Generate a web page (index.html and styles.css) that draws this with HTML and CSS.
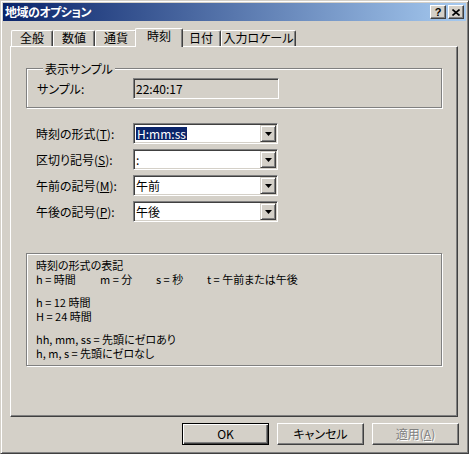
FILE: index.html
```html
<!DOCTYPE html>
<html lang="ja">
<head>
  <meta charset="UTF-8" />
  <title>地域のオプション</title>
  <link rel="stylesheet" href="styles.css">
</head>
<body>
  <div class="window">
    <div class="titlebar">
      <span class="title">地域のオプション</span>
      <div class="caption-buttons">
        <button class="cap-btn">?</button>
        <button class="cap-btn">
          <svg width="8" height="7" viewBox="0 0 8 7">
            <path d="M0.5 0.5 L7.5 6.5 M7.5 0.5 L0.5 6.5" stroke="#000" stroke-width="1.6" fill="none"/>
          </svg>
        </button>
      </div>
    </div>

    <div class="dialog">
      <div class="tabs">
        <div class="tab w42">全般</div>
        <div class="tab w42">数値</div>
        <div class="tab w42">通貨</div>
        <div class="tab active">時刻</div>
        <div class="tab w40">日付</div>
        <div class="tab w75">入力ロケール</div>
      </div>

      <div class="panel">
        <fieldset class="group">
          <legend>表示サンプル</legend>
          <div class="sample-row">
            <span class="label">サンプル:</span>
            <div class="field readonly">22:40:17</div>
          </div>
        </fieldset>

        <div class="form">
          <div class="form-row">
            <span class="label">時刻の形式(<u>T</u>):</span>
            <div class="combo">
              <span class="combo-text"><span class="selected">H:mm:ss</span></span>
              <span class="drop-btn"><svg width="7" height="4" viewBox="0 0 7 4"><path d="M0 0 H7 L3.5 4 Z" fill="#000"/></svg></span>
            </div>
          </div>
          <div class="form-row">
            <span class="label">区切り記号(<u>S</u>):</span>
            <div class="combo">
              <span class="combo-text">:</span>
              <span class="drop-btn"><svg width="7" height="4" viewBox="0 0 7 4"><path d="M0 0 H7 L3.5 4 Z" fill="#000"/></svg></span>
            </div>
          </div>
          <div class="form-row">
            <span class="label">午前の記号(<u>M</u>):</span>
            <div class="combo">
              <span class="combo-text">午前</span>
              <span class="drop-btn"><svg width="7" height="4" viewBox="0 0 7 4"><path d="M0 0 H7 L3.5 4 Z" fill="#000"/></svg></span>
            </div>
          </div>
          <div class="form-row">
            <span class="label">午後の記号(<u>P</u>):</span>
            <div class="combo">
              <span class="combo-text">午後</span>
              <span class="drop-btn"><svg width="7" height="4" viewBox="0 0 7 4"><path d="M0 0 H7 L3.5 4 Z" fill="#000"/></svg></span>
            </div>
          </div>
        </div>

        <div class="info">
          <p>
            時刻の形式の表記<br>
            <span class="col c1">h = 時間</span><span class="col c2">m = 分</span><span class="col c3">s = 秒</span><span>t = 午前または午後</span>
          </p>
          <p>
            h = 12 時間<br>
            H = 24 時間
          </p>
          <p>
            hh, mm, ss = 先頭にゼロあり<br>
            h, m, s = 先頭にゼロなし
          </p>
        </div>
      </div>

      <div class="buttons">
        <button class="btn default">OK</button>
        <button class="btn">キャンセル</button>
        <button class="btn disabled">適用(<u>A</u>)</button>
      </div>
    </div>
  </div>
</body>
</html>
```

FILE: styles.css
```css
body {
  margin: 0;
  font-family: "Noto Sans CJK JP", sans-serif;
  font-size: 12px;
  font-feature-settings: "palt";
  color: #000;
  background: #d4d0c8;
}

button {
  font-family: inherit;
  font-size: 12px;
  font-feature-settings: "palt";
  color: #000;
  padding: 0;
  margin: 0;
}

.window {
  width: 469px;
  height: 454px;
  box-sizing: border-box;
  background: #d4d0c8;
  border: 1px solid;
  border-color: #d4d0c8 #404040 #404040 #d4d0c8;
  box-shadow: inset 1px 1px #fff, inset -1px -1px #808080;
  padding: 2px;
}

/* title bar */
.titlebar {
  height: 18px;
  display: flex;
  align-items: center;
  justify-content: space-between;
  padding: 0 2px;
  background: linear-gradient(to right, #0a246a, #a6caf0);
}

.title {
  color: #fff;
  font-weight: bold;
  line-height: 14px;
  letter-spacing: -0.5px;
}

.caption-buttons {
  display: flex;
  gap: 2px;
}

.cap-btn {
  width: 16px;
  height: 14px;
  box-sizing: border-box;
  background: #d4d0c8;
  border: 1px solid;
  border-color: #fff #404040 #404040 #fff;
  box-shadow: inset -1px -1px #808080;
  display: flex;
  align-items: center;
  justify-content: center;
  font-family: "Liberation Sans", sans-serif;
  font-weight: bold;
  font-size: 11px;
  line-height: 10px;
}

/* dialog body */
.dialog {
  padding: 0 8px 0 7px;
}

.tabs {
  height: 25px;
  display: flex;
  align-items: flex-end;
  padding-left: 1px;
}

.tab {
  height: 16px;
  box-sizing: border-box;
  border-top: 1px solid #fff;
  border-left: 1px solid #fff;
  border-right: 1px solid #404040;
  border-radius: 2px 2px 0 0;
  box-shadow: inset -1px 0 #808080;
  text-align: center;
  line-height: 14px;
  background: #d4d0c8;
}

.w42 { width: 42px; }
.w40 { width: 40px; }
.w75 { width: 75px; }

.tab.active {
  width: 48px;
  height: 19px;
  margin: 0 -2px -1px;
  position: relative;
  z-index: 1;
}

.panel {
  height: 371px;
  box-sizing: border-box;
  border: 1px solid;
  border-color: #fff #404040 #404040 #fff;
  box-shadow: inset -1px -1px #808080;
  padding-top: 15px;
}

.group {
  margin: 0 15px;
  padding: 3px 0 8px 10px;
  border: 1px solid #808080;
  box-shadow: inset 1px 1px #fff, 1px 1px #fff;
}

.group legend {
  margin-left: 6px;
  padding: 0 2px;
  line-height: 13px;
  background: #d4d0c8;
}

.sample-row,
.form-row {
  display: flex;
  align-items: center;
}

.sample-row .label {
  width: 96px;
}

.field {
  width: 146px;
  height: 21px;
  box-sizing: border-box;
  border: 1px solid;
  border-color: #808080 #fff #fff #808080;
  box-shadow: inset 1px 1px #404040, inset -1px -1px #d4d0c8;
  padding-left: 2px;
  line-height: 19px;
}

.readonly {
  background: #d4d0c8;
}

.form {
  margin-top: 15px;
  padding-left: 25px;
  display: flex;
  flex-direction: column;
  gap: 5px;
}

.form-row .label {
  width: 97px;
}

.combo {
  width: 145px;
  height: 21px;
  box-sizing: border-box;
  border: 1px solid;
  border-color: #808080 #fff #fff #808080;
  box-shadow: inset 1px 1px #404040, inset -1px -1px #d4d0c8;
  background: #fff;
  padding: 1px;
  display: flex;
}

.combo-text {
  flex: 1;
  padding-left: 1px;
  display: flex;
  align-items: center;
  line-height: 13px;
}

.selected {
  background: #0a246a;
  color: #fff;
  padding: 0 1px;
}

.drop-btn {
  width: 16px;
  height: 17px;
  box-sizing: border-box;
  background: #d4d0c8;
  border: 1px solid;
  border-color: #d4d0c8 #404040 #404040 #d4d0c8;
  box-shadow: inset 1px 1px #fff, inset -1px -1px #808080;
  display: flex;
  align-items: center;
  justify-content: center;
}

.info {
  margin: 31px 15px 0;
  height: 113px;
  box-sizing: border-box;
  border: 1px solid #808080;
  box-shadow: inset 1px 1px #fff, 1px 1px #fff;
  padding: 4px 9px;
  font-size: 11px;
  line-height: 14px;
}

.info p {
  margin: 0 0 9px;
}

.col {
  display: inline-block;
}

.c1 { width: 64px; }
.c2 { width: 56px; }
.c3 { width: 51px; }

/* bottom buttons */
.buttons {
  margin: 6px -1px 0 0;
  display: flex;
  justify-content: flex-end;
  gap: 8px;
}

.btn {
  width: 87px;
  height: 22px;
  box-sizing: border-box;
  background: #d4d0c8;
  border: 1px solid;
  border-color: #fff #404040 #404040 #fff;
  box-shadow: inset -1px -1px #808080;
  line-height: 18px;
}

.btn.default {
  border-color: #000;
  box-shadow: inset 1px 1px #fff, inset -1px -1px #404040, inset -2px -2px #808080;
}

.btn.disabled {
  color: #808080;
  text-shadow: 1px 1px 0 #fff;
}
```
